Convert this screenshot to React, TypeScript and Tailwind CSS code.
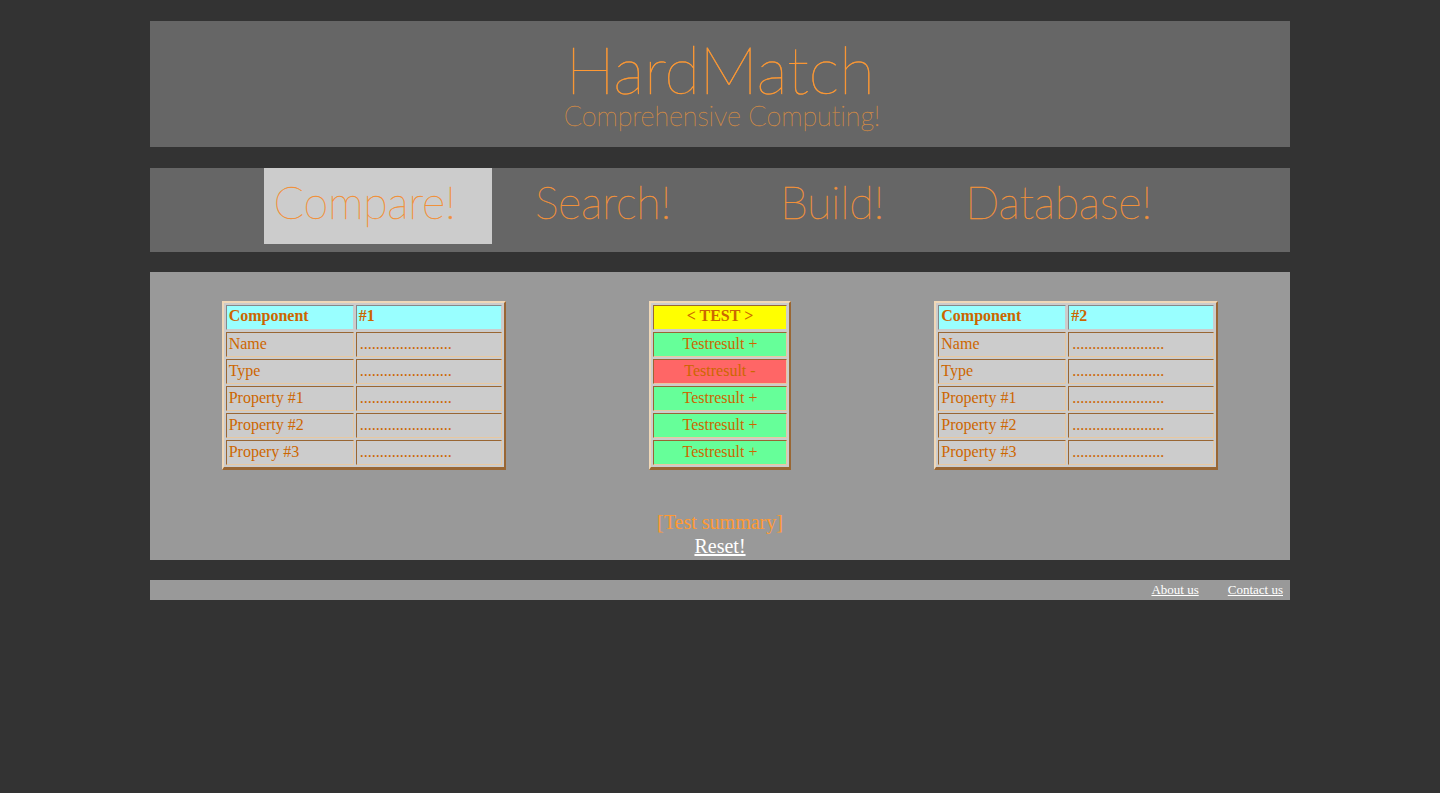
const serif = "font-['Liberation_Serif',serif]";
const thin = "font-['Lato',sans-serif] font-thin";

const nav = [
  { t: "Compare!", active: true, pad: "pr-[27px]" },
  { t: "Search!", active: false, pad: "pr-[6px]" },
  { t: "Build!", active: false, pad: "pr-[4px]" },
  { t: "Database!", active: false, pad: "pr-[7px]" },
];

const cell = "border border-t-[#996633] border-l-[#996633] border-r-[#e8c8a0] border-b-[#e8c8a0] p-0 h-[25px]";
const headCell = "border border-t-[#888888] border-l-[#888888] border-r-[#cccccc] border-b-[#cccccc] p-0 h-[25px] pb-[4px]";
const frame = "border-separate border-spacing-[2px] border-2 border-b-[3px] border-t-[#f0d8b8] border-l-[#f0d8b8] border-r-[#996633] border-b-[#996633] table-fixed bg-[#cccccc] text-[#cc6600] text-base leading-[18px]";

function CompareTable({ no, rows }: { no: string; rows: string[] }) {
  return (
    <table className={frame + " w-[284px]"}>
      <colgroup>
        <col className="w-[128px]" />
        <col className="w-[146px]" />
      </colgroup>
      <tbody>
        <tr className="bg-[#99ffff] font-bold">
          <td className={headCell + " pl-[2px]"}>Component</td>
          <td className={headCell + " pl-[2px]"}>{no}</td>
        </tr>
        {rows.map((r) => (
          <tr key={r} className="bg-[#cccccc]">
            <td className={cell + " pl-[2px] pb-[2px]"}>{r}</td>
            <td className={cell + " pl-[3px] pb-[2px]"}>.......................</td>
          </tr>
        ))}
      </tbody>
    </table>
  );
}

function TestTable() {
  const results = ["+", "-", "+", "+", "+"];
  return (
    <table className={frame + " w-[142px] text-center"}>
      <tbody>
        <tr className="bg-[#ffff00] font-bold">
          <td className={headCell + " border-t-[#996633] border-l-[#996633]"}>{"< TEST >"}</td>
        </tr>
        {results.map((r, i) => (
          <tr key={i} className={r === "+" ? "bg-[#66ff99]" : "bg-[#ff6666]"}>
            <td className={cell + " pb-[2px]"}>Testresult {r}</td>
          </tr>
        ))}
      </tbody>
    </table>
  );
}

export default function App() {
  return (
    <div className={"min-h-[793px] bg-[#333333] pt-[21px] " + serif}>
      <div className="w-[1140px] mx-auto flex flex-col">
        <header className="h-[126px] bg-[#666666] flex flex-col items-center pt-[18px]">
          <div className={thin + " text-[66px] leading-[60px] tracking-[-0.3px] text-[#ff9933] [-webkit-text-stroke:0.5px_#ff9933]"}>HardMatch</div>
          <div className={thin + " text-[27px] leading-[30px] tracking-[-0.1px] text-[#d08a45] [-webkit-text-stroke:0.3px_#d08a45] pl-[4px] mt-[2px]"}>Comprehensive Computing!</div>
        </header>

        <nav className="mt-[21px] h-[84px] bg-[#666666] flex justify-start pl-[114px]">
          {nav.map((n) => (
            <div
              key={n.t}
              className={
                "w-[228px] h-[76px] flex justify-center " +
                thin +
                " text-[45px] leading-[68px] tracking-[-0.3px] text-[#f0913a] [-webkit-text-stroke:0.4px_#f0913a] " +
                (n.active ? "bg-[#cccccc] " : "") +
                n.pad
              }
            >
              {n.t}
            </div>
          ))}
        </nav>

        <main className="mt-[20px] h-[288px] bg-[#999999] pt-[29px] flex flex-col">
          <div className="flex justify-around items-start">
            <CompareTable no="#1" rows={["Name", "Type", "Property #1", "Property #2", "Propery #3"]} />
            <TestTable />
            <CompareTable no="#2" rows={["Name", "Type", "Property #1", "Property #2", "Property #3"]} />
          </div>
          <div className="mt-[40px] text-center text-[20px] leading-[24px]">
            <div className="text-[#ff9933]">[Test summary]</div>
            <a href="#" className="text-white underline">Reset!</a>
          </div>
        </main>

        <footer className="mt-[20px] h-[20px] bg-[#999999] flex justify-end items-center gap-[29px] pr-[7px] text-[13px] leading-[20px] text-white">
          <a href="#" className="underline">About us</a>
          <a href="#" className="underline">Contact us</a>
        </footer>
      </div>
    </div>
  );
}
